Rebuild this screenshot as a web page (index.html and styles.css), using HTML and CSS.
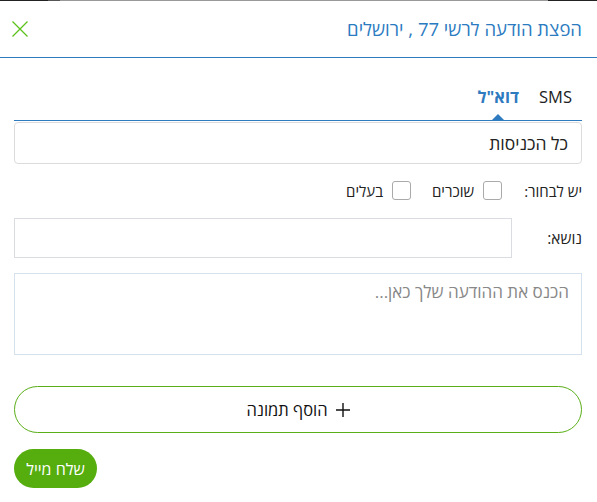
FILE: index.html
```html
<!DOCTYPE html>
<html lang="he" dir="rtl">
<head>
<meta charset="utf-8">
<link rel="stylesheet" href="styles.css">
</head>
<body>
<div class="topstrip"></div>
<header class="header">
  <h1 class="title">הפצת הודעה לרשי 77 , ירושלים</h1>
  <button class="close" aria-label="סגור">
    <svg width="16" height="16" viewBox="0 0 16 16"><path d="M0.5 0.5 L15.5 15.5 M15.5 0.5 L0.5 15.5" stroke="#5cc11a" stroke-width="1.3" fill="none"/></svg>
  </button>
</header>
<main class="content">
  <nav class="tabs">
    <span class="tab">SMS</span>
    <span class="tab active">דוא"ל</span>
  </nav>
  <div class="select">כל הכניסות</div>
  <div class="choose">
    <span class="choose-label">יש לבחור:</span>
    <label class="check"><span class="box"></span><span>שוכרים</span></label>
    <label class="check"><span class="box"></span><span>בעלים</span></label>
  </div>
  <div class="subject">
    <span class="subject-label">נושא:</span>
    <div class="input"></div>
  </div>
  <div class="textarea"><span class="placeholder">הכנס את ההודעה שלך כאן...</span></div>
  <button class="add-image"><svg class="plus" width="14" height="14" viewBox="0 0 14 14"><path d="M7 0 V14 M0 7 H14" stroke="#111" stroke-width="1.4" fill="none"/></svg>הוסף תמונה</button>
  <div class="actions"><button class="send">שלח מייל</button></div>
</main>
</body>
</html>
```
FILE: styles.css
```css
* { box-sizing: border-box; }
html, body { margin: 0; padding: 0; background: #fff; }
body {
  font-family: "Open Sans", "Liberation Sans", sans-serif;
  color: #222;
  width: 597px;
  height: 502px;
  overflow: hidden;
}
.topstrip {
  height: 1px;
  background: linear-gradient(to right, #222 0, #222 48px, #555 48px, #555 60px, #999 60px, #999 548px, #222 548px);
}
.header {
  height: 57px;
  border-bottom: 1px solid #2f7bbf;
  display: flex;
  align-items: center;
  justify-content: space-between;
  padding: 0 15px 0 12px;
}
.title {
  margin: 0;
  font-size: 18.5px;
  font-weight: 400;
  color: #2b7bc1;
  margin-top: -2px;
}
.close {
  border: 0;
  background: none;
  padding: 0;
  width: 16px;
  height: 16px;
  display: flex;
}
.content {
  padding: 0 15px 0 14px;
}
.tabs {
  display: flex;
  gap: 20px;
  padding: 28px 10px 0 0;
  height: 63px;
  border-bottom: 1px solid #2f7bbf;
}
.tab {
  font-size: 16.5px;
  color: #222;
  line-height: 22px;
  position: relative;
}
.tab.active {
  font-weight: 700;
  color: #2f7bbf;
}
.tab.active::after {
  content: "";
  position: absolute;
  left: 50%;
  margin-left: -6px;
  bottom: 0;
  border-left: 6px solid transparent;
  border-right: 6px solid transparent;
  border-bottom: 6px solid #2f7bbf;
}
.select {
  margin-top: 1px;
  height: 42px;
  border: 1px solid #dcdcdc;
  border-radius: 4px;
  display: flex;
  align-items: center;
  padding: 0 13px;
  font-size: 17.5px;
  color: #222;
}
.choose {
  display: flex;
  align-items: center;
  height: 52px;
  font-size: 15px;
  padding-top: 1px;
}
.choose-label { margin-left: 22px; }
.check {
  display: flex;
  align-items: center;
  gap: 9px;
  margin-left: 21px;
}
.box {
  width: 19px;
  height: 19px;
  border: 1px solid #aaa;
  border-radius: 3px;
  display: inline-block;
}
.subject {
  display: flex;
  align-items: center;
  gap: 34px;
  margin-top: 2px;
}
.subject-label {
  font-size: 15.5px;
  width: 36px;
}
.input {
  flex: 1;
  height: 40px;
  border: 1px solid #d9dde2;
}
.textarea {
  margin-top: 15px;
  height: 82px;
  border: 1px solid #d5e2ee;
  padding: 6px 12px;
}
.placeholder {
  font-size: 17px;
  color: #888;
}
.add-image {
  margin-top: 31px;
  width: 100%;
  height: 47px;
  border: 1px solid #5aae18;
  border-radius: 24px;
  background: #fff;
  font-family: inherit;
  font-size: 16.5px;
  color: #111;
  display: flex;
  align-items: center;
  justify-content: center;
  gap: 8px;
}
.plus { flex: none; }
.actions {
  display: flex;
  justify-content: flex-end;
  margin-top: 16px;
}
.send {
  width: 83px;
  height: 39px;
  border: 0;
  border-radius: 20px;
  background: #55ad0e;
  color: #fff;
  font-family: inherit;
  font-size: 16px;
  padding: 0;
}
```
